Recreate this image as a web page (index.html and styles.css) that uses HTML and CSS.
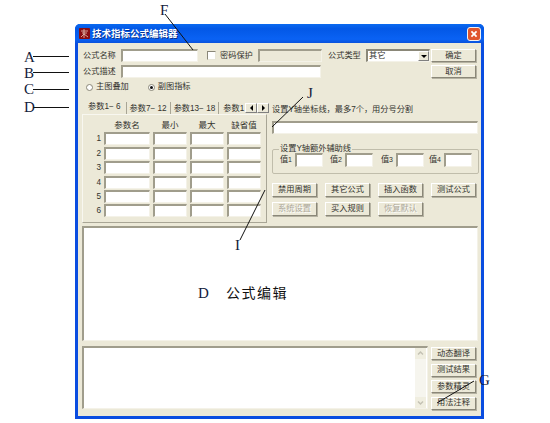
FILE: index.html
```html
<!DOCTYPE html>
<html lang="zh">
<head>
<meta charset="utf-8">
<title>技术指标公式编辑器</title>
<link rel="stylesheet" href="styles.css">
</head>
<body>
<div class="window">
  <div class="titlebar">
    <svg class="app-icon" viewBox="0 0 11 11"><rect width="11" height="11" rx="1" fill="#8a0d12"/><path d="M2 3h7M3 5h5M5 1v9M2 9l3-3 4 3" stroke="#e8c8b8" stroke-width=".8" fill="none"/></svg>
    <span class="title">技术指标公式编辑器</span>
    <span class="close"><svg viewBox="0 0 14 14"><path d="M4 4l6 6M10 4l-6 6" stroke="#fff" stroke-width="2"/></svg></span>
  </div>
  <div class="body">
    <div class="top">
      <div class="fields">
        <div class="row">
          <span class="lbl">公式名称</span>
          <input class="field name" type="text">
          <span class="check"></span>
          <span class="lbl pw">密码保护</span>
          <span class="field pwd"></span>
          <span class="lbl kind">公式类型</span>
          <span class="select"><span class="select-text">其它</span><span class="drop"><i class="tri-d"></i></span></span>
        </div>
        <div class="row">
          <span class="lbl">公式描述</span>
          <input class="field desc" type="text">
        </div>
        <div class="radios">
          <span class="radio"></span><span class="lbl r1">主图叠加</span>
          <span class="radio on"></span><span class="lbl">副图指标</span>
        </div>
      </div>
      <div class="side-btns">
        <button class="btn">确定</button>
        <button class="btn">取消</button>
      </div>
    </div>

    <div class="mid">
      <div class="tabs-col">
        <div class="tabstrip">
          <div class="tabs">
            <span class="tab active">参数1− 6</span>
            <span class="tab">参数7− 12</span>
            <span class="tab">参数13− 18</span>
            <span class="tab last">参数1</span>
          </div>
          <span class="spin"><i class="tri-l"></i></span>
          <span class="spin"><i class="tri-r"></i></span>
        </div>
        <div class="panel">
          <div class="head"></div><div class="head">参数名</div><div class="head">最小</div><div class="head">最大</div><div class="head">缺省值</div>
          <div class="num">1</div><input class="field" type="text"><input class="field" type="text"><input class="field" type="text"><input class="field" type="text">
          <div class="num">2</div><input class="field" type="text"><input class="field" type="text"><input class="field" type="text"><input class="field" type="text">
          <div class="num">3</div><input class="field" type="text"><input class="field" type="text"><input class="field" type="text"><input class="field" type="text">
          <div class="num">4</div><input class="field" type="text"><input class="field" type="text"><input class="field" type="text"><input class="field" type="text">
          <div class="num">5</div><input class="field" type="text"><input class="field" type="text"><input class="field" type="text"><input class="field" type="text">
          <div class="num">6</div><input class="field" type="text"><input class="field" type="text"><input class="field" type="text"><input class="field" type="text">
        </div>
      </div>
      <div class="right-col">
        <div class="axis-label">设置Y轴坐标线，最多7个，用分号分割</div>
        <input class="field axis" type="text">
        <fieldset class="group">
          <legend>设置Y轴额外辅助线</legend>
          <div class="vals">
            <span class="lbl">值<small>1</small></span><input class="field" type="text">
            <span class="lbl">值<small>2</small></span><input class="field" type="text">
            <span class="lbl">值<small>3</small></span><input class="field" type="text">
            <span class="lbl">值<small>4</small></span><input class="field" type="text">
          </div>
        </fieldset>
        <div class="actions">
          <button class="btn">禁用周期</button>
          <button class="btn">其它公式</button>
          <button class="btn">插入函数</button>
          <button class="btn">测试公式</button>
          <button class="btn off">系统设置</button>
          <button class="btn">买入规则</button>
          <button class="btn off">恢复默认</button>
        </div>
      </div>
    </div>

    <div class="field editor"></div>

    <div class="lower">
      <div class="field output">
        <div class="scroll">
          <span class="sb"><svg viewBox="0 0 11 11"><path d="M3 6.5l2.5-2.5 2.5 2.5" stroke="#c4c2b4" stroke-width="1.5" fill="none"/></svg></span>
          <span class="sb"><svg viewBox="0 0 11 11"><path d="M3 4.5l2.5 2.5 2.5-2.5" stroke="#c4c2b4" stroke-width="1.5" fill="none"/></svg></span>
        </div>
      </div>
      <div class="lower-btns">
        <button class="btn">动态翻译</button>
        <button class="btn">测试结果</button>
        <button class="btn">参数精灵</button>
        <button class="btn">用法注释</button>
      </div>
    </div>
  </div>
</div>

<svg class="marks" viewBox="0 0 550 423">
  <g stroke="#111" stroke-width="1" fill="none">
    <path d="M33 56.5H69M33 72.5H69M33 89.5H69M33 107.5H69"/>
    <path d="M165 14L193 50M474 381L437 403M265 190L240 240M303 97L272 127"/>
  </g>
</svg>
<span class="mark m-a">A</span>
<span class="mark m-b">B</span>
<span class="mark m-c">C</span>
<span class="mark m-d">D</span>
<span class="mark m-f">F</span>
<span class="mark m-g">G</span>
<span class="mark m-i">I</span>
<span class="mark m-j">J</span>
<span class="mark m-e">D</span>
<span class="caption">公式编辑</span>
</body>
</html>
```

FILE: styles.css
```css
* { box-sizing: border-box; }
html, body { margin: 0; padding: 0; background: #fff; }
body {
  width: 550px; height: 423px; overflow: hidden; position: relative;
  padding: 24px 0 0 75px;
  font: 8.2px/12px "Liberation Sans", "Noto Sans CJK SC", sans-serif;
  color: #33332e;
}
.window {
  width: 409px; height: 395px;
  display: flex; flex-direction: column;
  background: #0a4de0;
  border-radius: 5px 5px 0 0;
  padding: 0 3px 3px 3px;
}
.titlebar {
  height: 19px; flex: none; margin: 0 -3px;
  display: flex; align-items: center;
  padding: 0 3px 0 4px;
  background: linear-gradient(#0a6af0, #0358e6 25%, #0a62f4 80%, #0a52dc);
  border-radius: 5px 5px 0 0;
}
.app-icon { width: 11px; height: 11px; margin-right: 2px; }
.title { flex: 1; color: #fff; font-weight: 700; font-size: 9.5px; text-shadow: 1px 1px 0 #0a2f8a; }
.close {
  width: 14px; height: 14px; border: 1px solid #f2f2f2; border-radius: 3px;
  background: #e0562e; display: block;
}
.close svg { display: block; width: 12px; height: 12px; }
.body {
  flex: 1; background: #ece9d8;
  padding: 6px 5px 0 4px;
  display: flex; flex-direction: column;
}
.top { display: flex; justify-content: space-between; height: 53px; flex: none; }
.fields { width: 347px; }
.row { display: flex; align-items: center; height: 13px; margin-bottom: 3px; }
.lbl { white-space: nowrap; }
.field {
  display: block; margin: 0; padding: 0; min-width: 0; width: 100%; height: 13px;
  background: #fff; outline: 0;
  border: 2px solid; border-color: #a09d8c #f4f2e8 #f4f2e8 #a09d8c;
  border-width: 2px 1px 1px 2px; border-radius: 0;
}
.row .lbl:first-child { width: 39px; flex: none; padding-left: 1px; }
.field.name { width: 77px; flex: none; }
.field.desc { width: 200px; flex: none; }
.check { width: 9px; height: 9px; flex: none; margin-left: 9px; background: #fff; border: 1px solid; border-color: #8a8778 #e8e6d8 #e8e6d8 #8a8778; }
.row .pw { margin-left: 4px; width: 33px; flex: none; }
.field.pwd { width: 64px; flex: none; margin-left: 5px; background: #ece9d8; }
.row .kind { margin-left: 6px; width: 33px; flex: none; }
.select {
  width: 64px; height: 13px; flex: none; margin-left: 5px;
  display: flex; align-items: center; justify-content: space-between;
  background: #fff; border: 1px solid; border-color: #8a8778 #f4f2e8 #f4f2e8 #8a8778;
  border-width: 2px 1px 1px 2px;
}
.select-text { padding-left: 1px; }
.drop {
  width: 11px; height: 10px; background: #ece9d8;
  border: 1px solid; border-color: #fff #808080 #808080 #fff;
  display: flex; align-items: center; justify-content: center;
}
.tri-d { border: 3px solid transparent; border-top-color: #000; border-bottom-width: 0; }
.tri-l { border: 3px solid transparent; border-right-color: #000; border-left-width: 0; }
.tri-r { border: 3px solid transparent; border-left-color: #000; border-right-width: 0; }
.radios { display: flex; align-items: center; height: 12px; margin-top: 3px; padding-left: 4px; }
.radio {
  width: 7px; height: 7px; border-radius: 50%; flex: none; margin-right: 3px; position: relative;
  background: #fff; border: 1px solid #8a8778;
}
.radio.on::after { content: ""; position: absolute; left: 1px; top: 1px; width: 3px; height: 3px; border-radius: 50%; background: #111; }
.r1 { margin-right: 19px; }
.side-btns { display: flex; flex-direction: column; gap: 3px; width: 45px; }
.btn {
  display: block; margin: 0; padding: 0; width: 45px; height: 13px;
  font: inherit; color: inherit; line-height: 10px; text-align: center; white-space: nowrap;
  background: #ece9d8;
  border: 1px solid; border-color: #fff #8a8778 #8a8778 #fff;
  box-shadow: 1px 1px 0 #b5b2a2;
}
.btn.off { color: #aca899; text-shadow: 1px 1px 0 #fff; }
.mid { display: flex; flex: none; height: 121px; }
.tabs-col { width: 188px; flex: none; }
.tabstrip { display: flex; align-items: flex-start; height: 12px; }
.tabs { display: flex; width: 163px; height: 12px; overflow: hidden; flex: none; }
.tab {
  flex: none; padding: 1px 3px 0 2px; height: 12px; line-height: 11px; white-space: nowrap;
  border-right: 1px solid #a8a595; margin-right: 1px;
}
.tab.active { padding: 0 5px 0 6px; line-height: 10px; background: #ece9d8; }
.tab.last { padding-left: 3px; border-right: 0; margin-right: 0; }
.spin {
  width: 12px; height: 10px; flex: none; margin: 1px 0 0 0;
  display: flex; align-items: center; justify-content: center;
  background: #ece9d8; border: 1px solid; border-color: #fff #808080 #808080 #fff;
}
.panel {
  width: 185px; height: 109px;
  border: 1px solid; border-color: #f8f7f0 #a8a595 #a8a595 #f8f7f0;
  display: grid;
  grid-template-columns: 18px 46px 34px 34px 34px;
  grid-template-rows: 16px repeat(6, 13px);
  column-gap: 3px; row-gap: 1.4px;
  align-content: start;
}
.head { text-align: center; line-height: 20px; font-size: 8.5px; }
.num { text-align: right; line-height: 14px; }
.right-col { width: 206px; margin-left: 2px; flex: none; }
.axis-label { height: 12px; margin: 2px 0 5px; white-space: nowrap; }
.field.axis { height: 13px; }
.group {
  margin: 10px 0 0; padding: 0 6px 0 6px; height: 30px; width: 206px;
  border: 1px solid #c0bdab; border-radius: 2px;
}
.group legend { padding: 0 1px; line-height: 10px; height: 10px; }
.vals {
  display: grid;
  grid-template-columns: 16px 28px 22px 28px 23px 28px 20px 28px;
  align-items: center;
  margin-top: -1px;
}
.vals .lbl { text-align: right; padding-right: 3px; }
.vals .field { height: 14px; }
.vals small { font-size: 7px; }
.actions {
  display: grid; grid-template-columns: repeat(4, 45px); column-gap: 8px; row-gap: 5px;
  margin-top: 9px;
}
.actions .btn { height: 14px; }
.field.editor { flex: none; height: 115px; width: 396px; margin-top: 3px; }
.lower { display: flex; justify-content: space-between; margin-top: 5px; flex: none; height: 64px; }
.field.output { width: 346px; height: 63px; display: flex; justify-content: flex-end; }
.scroll {
  width: 11px; margin: 0 1px 0 0; background: #f6f5ee;
  display: flex; flex-direction: column; justify-content: space-between;
}
.sb { display: block; width: 11px; height: 11px; background: #f0eee0; }
.sb svg { display: block; width: 11px; height: 11px; }
.lower-btns { display: flex; flex-direction: column; gap: 3.5px; width: 45px; padding-top: 1px; }
.marks { position: absolute; left: 0; top: 0; width: 550px; height: 423px; pointer-events: none; }
.mark {
  position: absolute; font: 15px/14px "Liberation Serif", serif; color: #12203a;
}
.m-a { left: 24px; top: 50px; }
.m-b { left: 24px; top: 66px; }
.m-c { left: 24px; top: 82px; }
.m-d { left: 24px; top: 100px; }
.m-f { left: 160px; top: 3px; }
.m-g { left: 479px; top: 373px; }
.m-i { left: 235px; top: 238px; }
.m-j { left: 307px; top: 86px; }
.m-e { left: 198px; top: 286px; }
.caption {
  position: absolute; left: 226px; top: 284px;
  font: 14px/16px "Noto Sans CJK SC", sans-serif; letter-spacing: 1.5px; color: #111;
}
```
